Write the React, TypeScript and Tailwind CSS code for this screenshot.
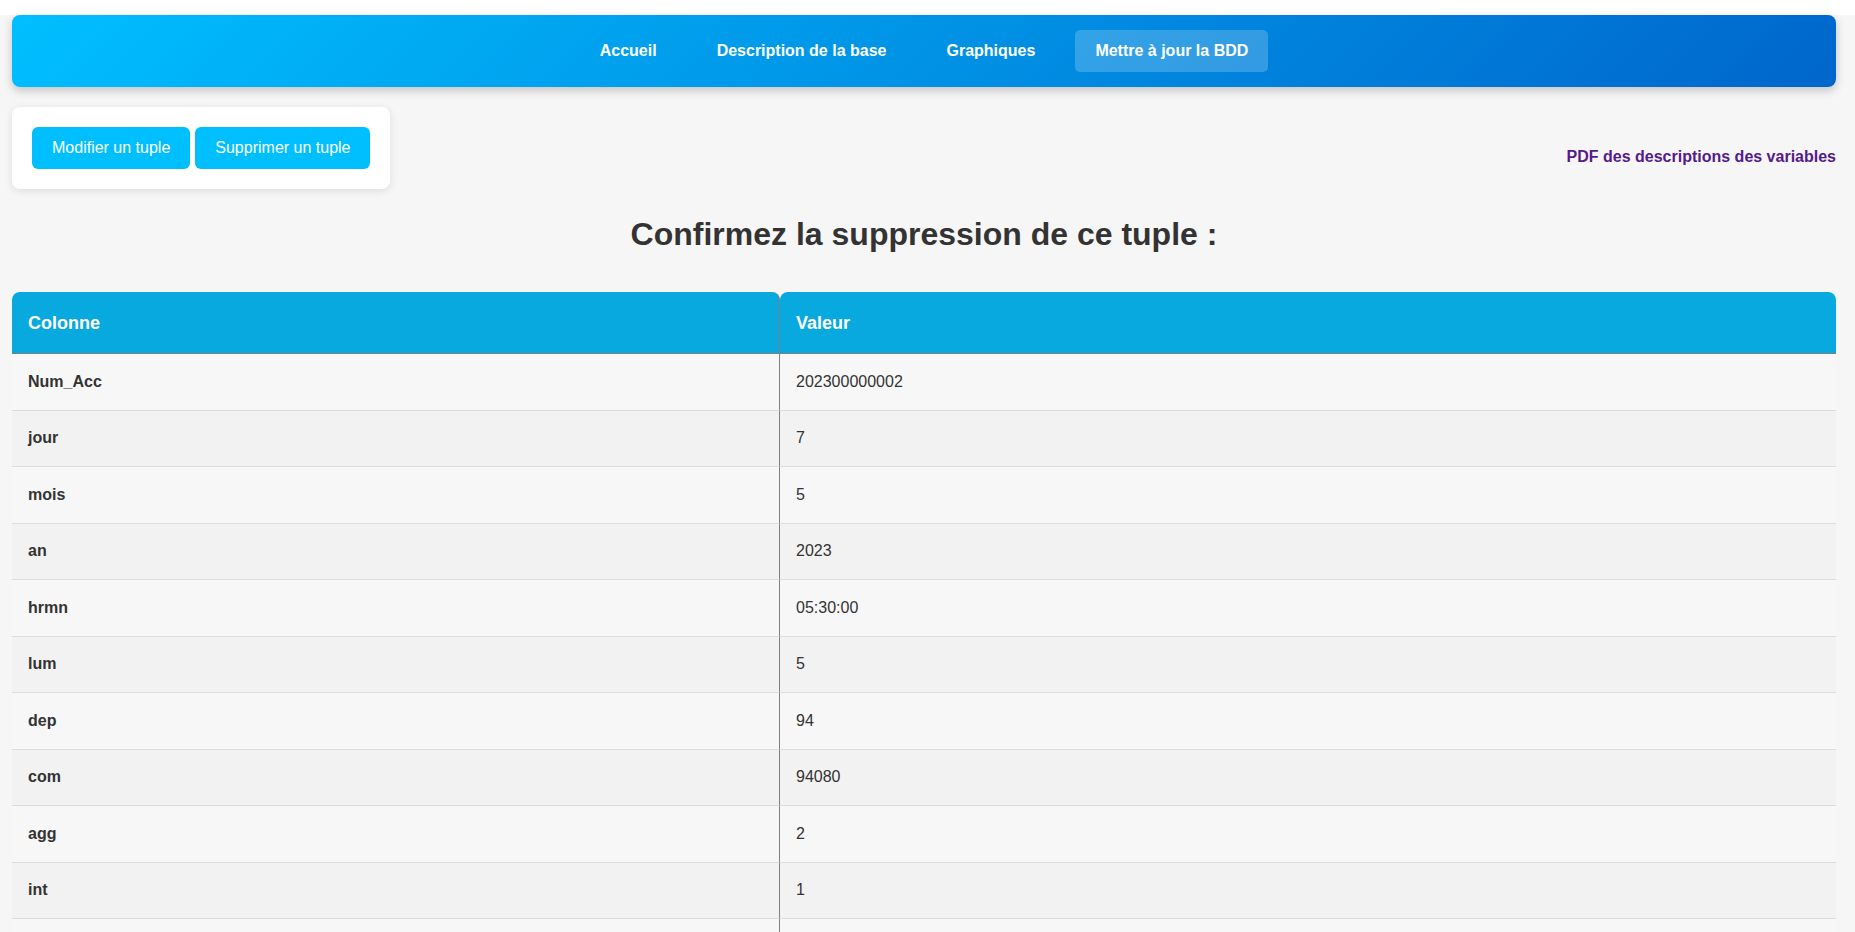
import React from "react";

const navLinks = ["Accueil", "Description de la base", "Graphiques", "Mettre à jour la BDD"];

const rows: [string, string][] = [
  ["Num_Acc", "202300000002"],
  ["jour", "7"],
  ["mois", "5"],
  ["an", "2023"],
  ["hrmn", "05:30:00"],
  ["lum", "5"],
  ["dep", "94"],
  ["com", "94080"],
  ["agg", "2"],
  ["int", "1"],
  ["atm", "1"],
  ["col", "6"],
  ["adr", "AVENUE DE PARIS"],
];

function NavBar() {
  return (
    <nav className="mt-[15px] h-[72px] rounded-lg bg-linear-[135deg] from-[#00bfff] to-[#0066cc] shadow-[0_4px_10px_rgba(0,0,0,0.2)] flex items-center justify-center gap-5">
      {navLinks.map((label, i) => (
        <a
          key={label}
          href="#"
          className={
            "px-5 py-3 rounded-[5px] text-white font-bold text-[16px] leading-[18px] " +
            (i === navLinks.length - 1 ? "bg-white/20" : "")
          }
        >
          {label}
        </a>
      ))}
    </nav>
  );
}

export default function App() {
  return (
    <div
      className="min-h-screen bg-[#f6f6f6] pl-3 pr-[19px] text-[#333]"
      style={{ fontFamily: '"Liberation Sans", Arial, sans-serif' }}
    >
      <NavBar />

      {/* actions + lien pdf */}
      <div className="mt-5 flex items-start justify-between">
        <div className="bg-white rounded-lg p-5 shadow-[0_2px_8px_rgba(0,0,0,0.1)] flex gap-[5px]">
          <button className="h-[42px] px-5 rounded-[6px] bg-[#00bfff] text-white text-[16px]">
            Modifier un tuple
          </button>
          <button className="h-[42px] px-5 rounded-[6px] bg-[#00bfff] text-white text-[16px]">
            Supprimer un tuple
          </button>
        </div>
        <a href="#" className="mt-[41px] text-[16px] font-bold text-[#551a8b] leading-[18px]">
          PDF des descriptions des variables
        </a>
      </div>

      <h2 className="mt-[27px] text-center text-[32px] font-bold leading-9">
        Confirmez la suppression de ce tuple :
      </h2>

      <table className="mt-[40px] w-full border-separate border-spacing-0 text-[16px]">
        <thead>
          <tr>
            <th className="w-[768px] text-left bg-[#07a9de] text-white font-bold text-[18px] leading-[20px] px-4 py-[20.5px] rounded-t-lg border-r border-b border-[#7f7f7f]">
              Colonne
            </th>
            <th className="text-left bg-[#07a9de] text-white font-bold text-[18px] leading-[20px] px-4 py-[20.5px] rounded-t-lg border-b border-[#7f7f7f]">
              Valeur
            </th>
          </tr>
        </thead>
        <tbody>
          {rows.map(([col, val], i) => (
            <tr key={col} className={i % 2 === 0 ? "bg-[#f7f7f7]" : "bg-[#f2f2f2]"}>
              <td className="px-4 py-[18.5px] leading-[18.5px] font-bold border-b border-[#dddddd] border-r border-r-[#7f7f7f]">
                {col}
              </td>
              <td className="px-4 py-[18.5px] leading-[18.5px] border-b border-[#dddddd]">{val}</td>
            </tr>
          ))}
        </tbody>
      </table>
    </div>
  );
}
